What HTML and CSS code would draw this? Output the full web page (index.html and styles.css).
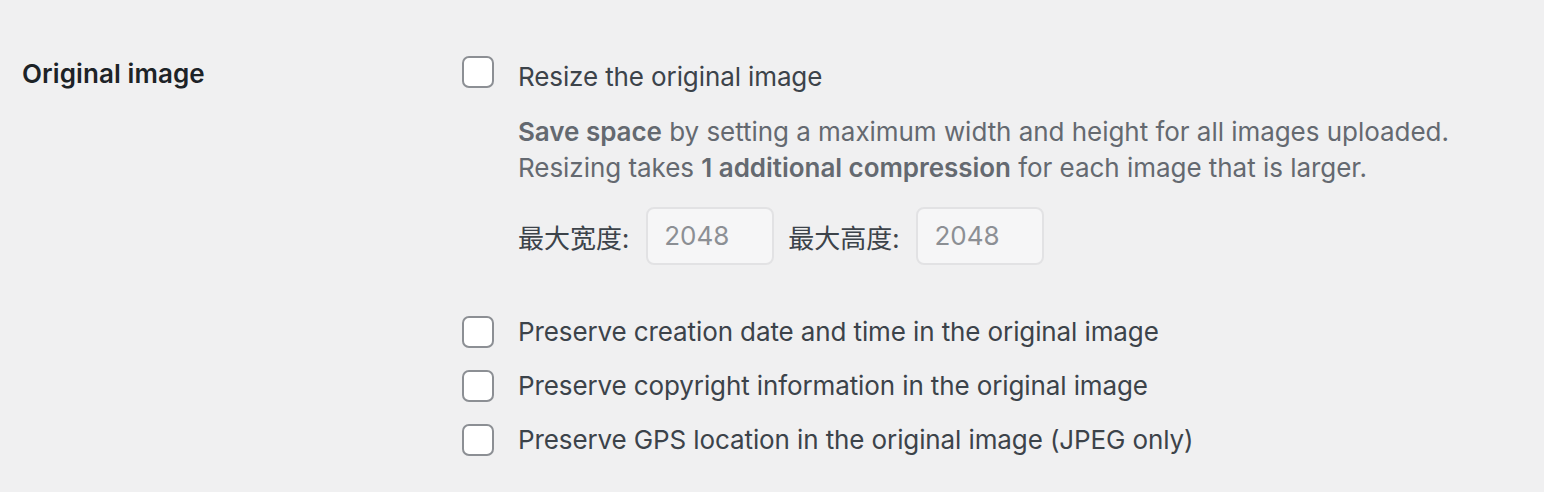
FILE: index.html
```html
<!DOCTYPE html>
<html lang="en">
<head>
<meta charset="utf-8">
<title>Original image</title>
<link rel="stylesheet" href="styles.css">
</head>
<body>
<div class="form-row">
  <div class="row-label">Original image</div>
  <div class="row-field">
    <label class="option option-first">
      <span class="checkbox"></span>
      <span class="option-text">Resize the original image</span>
    </label>
    <p class="description"><strong>Save space</strong> by setting a maximum width and height for all images uploaded.<br>Resizing takes <strong>1 additional compression</strong> for each image that is larger.</p>
    <div class="dimensions">
      <label class="dim-label">最大宽度:</label>
      <span class="dim-input">2048</span>
      <label class="dim-label">最大高度:</label>
      <span class="dim-input">2048</span>
    </div>
    <div class="option-list">
      <label class="option">
        <span class="checkbox"></span>
        <span class="option-text">Preserve creation date and time in the original image</span>
      </label>
      <label class="option">
        <span class="checkbox"></span>
        <span class="option-text">Preserve copyright information in the original image</span>
      </label>
      <label class="option">
        <span class="checkbox"></span>
        <span class="option-text">Preserve GPS location in the original image (JPEG only)</span>
      </label>
    </div>
  </div>
</div>
</body>
</html>
```
FILE: styles.css
```css
html, body {
  margin: 0;
  padding: 0;
  background: #f0f0f1;
}
body {
  font-family: "Inter", "Noto Sans CJK SC", sans-serif;
  font-size: 26px;
  color: #3c434a;
  width: 1544px;
  height: 492px;
  overflow: hidden;
}
.form-row {
  display: flex;
  padding: 56px 0 0 22px;
}
.row-label {
  width: 440px;
  flex: none;
  font-weight: 600;
  color: #1d2327;
  line-height: 36px;
  letter-spacing: 0.1px;
}
.row-field {
  display: flex;
  flex-direction: column;
}
.option {
  display: flex;
  align-items: center;
  height: 32px;
}
.option-first {
  align-items: flex-start;
  height: 39px;
}
.option-first .option-text {
  margin-top: 3px;
}
.checkbox {
  width: 28px;
  height: 28px;
  border: 2px solid #8c8f94;
  border-radius: 7px;
  background: #ffffff;
  flex: none;
  margin-right: 24px;
}
.option-text {
  line-height: 36px;
  white-space: nowrap;
  letter-spacing: -0.11px;
}
.description {
  margin: 19px 0 0 56px;
  line-height: 36px;
  color: #646970;
  letter-spacing: -0.04px;
}
.description strong {
  font-weight: 600;
}
.dimensions {
  display: flex;
  align-items: center;
  margin: 21px 0 0 56px;
  height: 58px;
}
.dim-label {
  font-family: "Noto Sans CJK SC", sans-serif;
  color: #3c434a;
  margin-right: 17px;
}
.dim-input {
  box-sizing: border-box;
  width: 128px;
  height: 58px;
  border: 2px solid #e2e2e4;
  border-radius: 8px;
  background: #f6f6f7;
  color: #8c8f94;
  padding-left: 16px;
  line-height: 54px;
  margin-right: 14px;
}
.option-list {
  display: flex;
  flex-direction: column;
  gap: 22px;
  margin-top: 51px;
}
```
